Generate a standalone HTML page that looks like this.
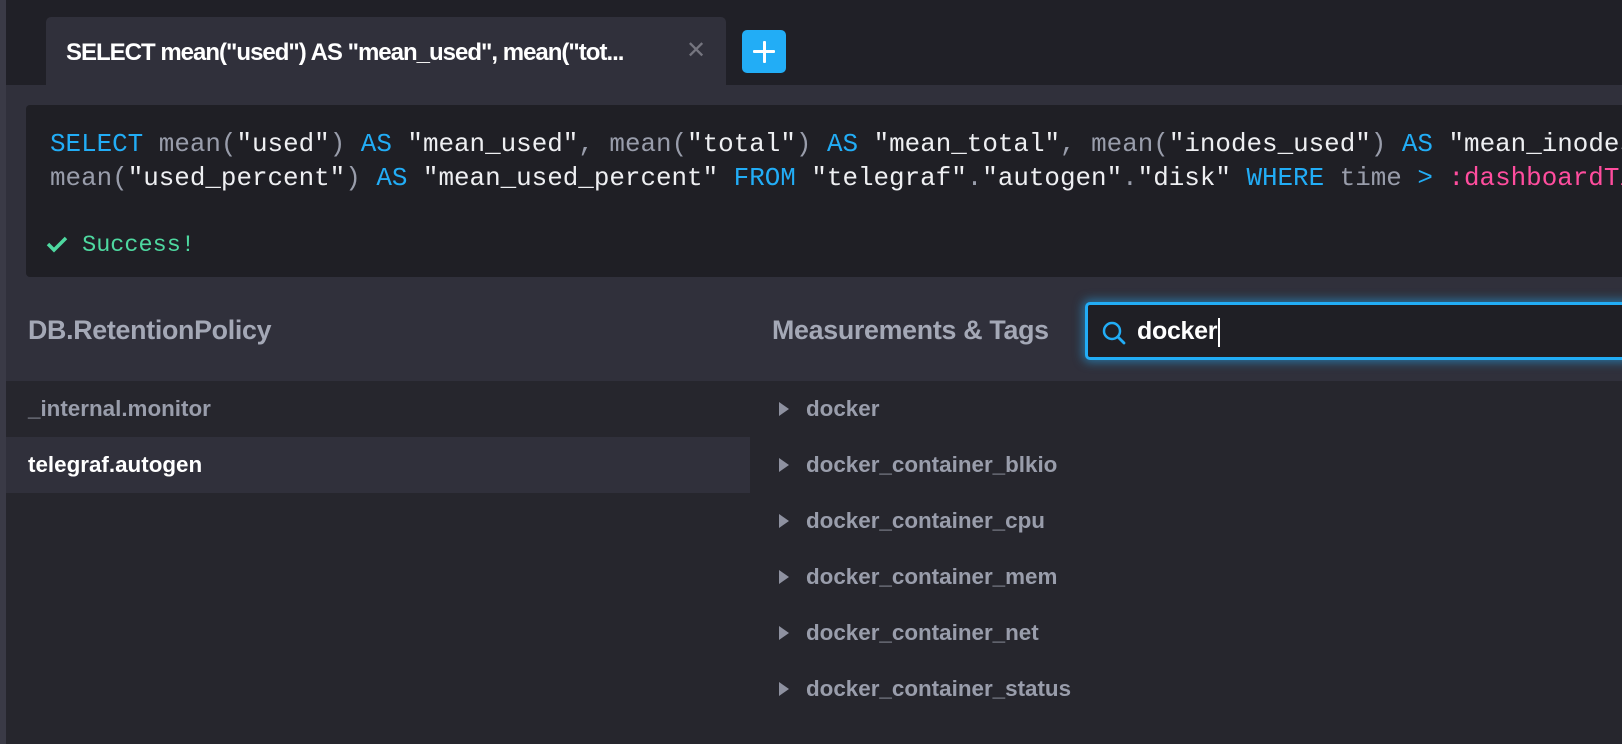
<!DOCTYPE html>
<html><head><style>
*{margin:0;padding:0;box-sizing:border-box}
body{width:1622px;height:744px;overflow:hidden;background:#292930;font-family:"Liberation Sans",sans-serif;position:relative}
.strip{position:absolute;left:0;top:0;width:6px;height:744px;background:#3a3a46}
.top{position:absolute;left:6px;top:0;right:0;height:85px;background:#202027}
.tab{position:absolute;left:46px;top:17px;width:680px;height:68px;background:#30303b;border-radius:5px 5px 0 0}
.tab span{position:absolute;left:20px;top:22px;color:#fff;font-weight:bold;font-size:24px;letter-spacing:-1px;white-space:nowrap}
.tab i{position:absolute;left:640px;top:19px;color:#75757f;font-style:normal;font-size:24px}
.plus{position:absolute;left:742px;top:30px;width:44px;height:43px;background:#22adf6;border-radius:5px}
.plus:before{content:"";position:absolute;left:11px;top:20px;width:22px;height:3px;background:#fff;border-radius:1px}
.plus:after{content:"";position:absolute;left:20.5px;top:10.5px;width:3px;height:22px;background:#fff;border-radius:1px}
.main{position:absolute;left:6px;top:85px;right:0;height:296px;background:#30303b}
.code{position:absolute;left:26px;top:105px;right:0;height:172px;background:#1f1f25;border-radius:4px 0 0 4px;font-family:"Liberation Mono",monospace;font-size:25.9px;color:#eeeff2;white-space:nowrap;overflow:hidden}
.l{position:absolute;left:24px}
.k{color:#22adf6}.g{color:#999dab}.p{color:#ff4d9e}
.ok{position:absolute;left:20px;top:127px;color:#4ed8a0;font-size:23.5px}
.list{position:absolute;left:6px;top:381px;right:0;bottom:0;background:#26262d}
.h{position:absolute;top:315px;font-size:26.8px;font-weight:bold;color:#a4a8b6;letter-spacing:-0.3px}
.sel{position:absolute;left:6px;top:437px;width:744px;height:56px;background:#30303b}
.row{position:absolute;font-size:22.4px;font-weight:bold;color:#999dab}
.search{position:absolute;left:1085px;top:302px;width:560px;height:58px;background:#1f1f25;border:3px solid #22adf6;border-radius:5px;box-shadow:0 0 10px 2px rgba(34,173,246,.55)}
.search span{position:absolute;left:49px;top:12px;font-size:25px;font-weight:bold;color:#fff;letter-spacing:-0.3px}
.cur{position:absolute;left:130px;top:13px;width:2px;height:29px;background:#fff}
.tri{position:absolute;width:0;height:0;border-left:10px solid #8e91a0;border-top:7px solid transparent;border-bottom:7px solid transparent}
</style></head><body>
<div class="strip"></div>
<div class="top"></div>
<div class="tab"><span>SELECT mean("used") AS "mean_used", mean("tot...</span><i>✕</i></div>
<div class="plus"></div>
<div class="main"></div>
<div class="code">
<div class="l" style="top:24px"><span class="k">SELECT</span> <span class="g">mean(</span>"used"<span class="g">)</span> <span class="k">AS</span> "mean_used"<span class="g">,</span> <span class="g">mean(</span>"total"<span class="g">)</span> <span class="k">AS</span> "mean_total"<span class="g">,</span> <span class="g">mean(</span>"inodes_used"<span class="g">)</span> <span class="k">AS</span> "mean_inodes_used",</div>
<div class="l" style="top:58px"><span class="g">mean(</span>"used_percent"<span class="g">)</span> <span class="k">AS</span> "mean_used_percent" <span class="k">FROM</span> "telegraf"<span class="g">.</span>"autogen"<span class="g">.</span>"disk" <span class="k">WHERE</span> <span class="g">time</span> <span class="k">&gt;</span> <span class="p">:dashboardTime:</span></div>
<div class="ok"><svg width="22" height="18" viewBox="0 0 22 18" style="vertical-align:-2px"><path d="M2 9l6 6L20 3" fill="none" stroke="#4ed8a0" stroke-width="3.5"/></svg> Success!</div>
</div>
<div class="list"></div>
<div class="h" style="left:28px">DB.RetentionPolicy</div>
<div class="h" style="left:772px">Measurements &amp; Tags</div>
<div class="search">
<svg style="position:absolute;left:13px;top:15px" width="26" height="26" viewBox="0 0 26 26"><circle cx="11" cy="11" r="8" fill="none" stroke="#22adf6" stroke-width="2.5"/><line x1="17" y1="17" x2="23" y2="23" stroke="#22adf6" stroke-width="2.8" stroke-linecap="round"/></svg>
<span>docker</span><div class="cur"></div></div>
<div class="sel"></div>
<div class="row" style="left:28px;top:396px">_internal.monitor</div>
<div class="row" style="left:28px;top:452px;color:#fff">telegraf.autogen</div>
<div class="tri" style="left:779px;top:402px"></div><div class="row" style="left:806px;top:396px">docker</div>
<div class="tri" style="left:779px;top:458px"></div><div class="row" style="left:806px;top:452px">docker_container_blkio</div>
<div class="tri" style="left:779px;top:514px"></div><div class="row" style="left:806px;top:508px">docker_container_cpu</div>
<div class="tri" style="left:779px;top:570px"></div><div class="row" style="left:806px;top:564px">docker_container_mem</div>
<div class="tri" style="left:779px;top:626px"></div><div class="row" style="left:806px;top:620px">docker_container_net</div>
<div class="tri" style="left:779px;top:682px"></div><div class="row" style="left:806px;top:676px">docker_container_status</div>
</body></html>
